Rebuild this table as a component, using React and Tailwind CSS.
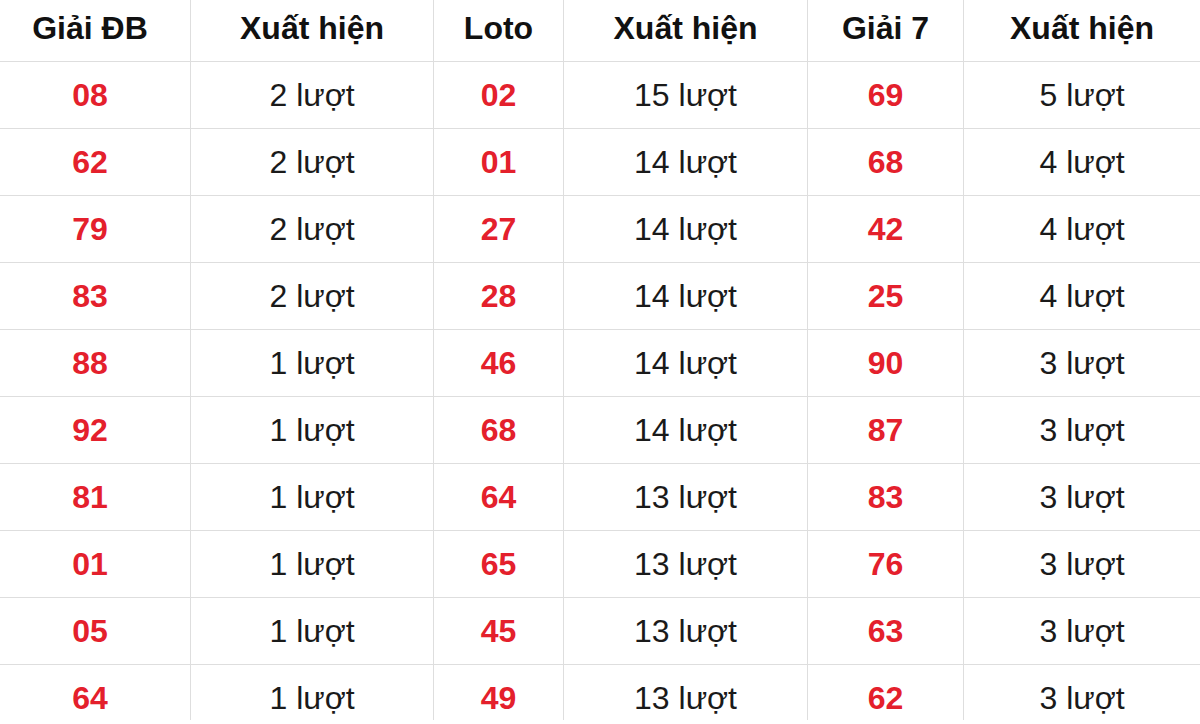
import React from "react";

const rows = [
  ["08", "2 lượt", "02", "15 lượt", "69", "5 lượt"],
  ["62", "2 lượt", "01", "14 lượt", "68", "4 lượt"],
  ["79", "2 lượt", "27", "14 lượt", "42", "4 lượt"],
  ["83", "2 lượt", "28", "14 lượt", "25", "4 lượt"],
  ["88", "1 lượt", "46", "14 lượt", "90", "3 lượt"],
  ["92", "1 lượt", "68", "14 lượt", "87", "3 lượt"],
  ["81", "1 lượt", "64", "13 lượt", "83", "3 lượt"],
  ["01", "1 lượt", "65", "13 lượt", "76", "3 lượt"],
  ["05", "1 lượt", "45", "13 lượt", "63", "3 lượt"],
  ["64", "1 lượt", "49", "13 lượt", "62", "3 lượt"],
];

const headers = ["Giải ĐB", "Xuất hiện", "Loto", "Xuất hiện", "Giải 7", "Xuất hiện"];

export default function App() {
  return (
    <div
      className="w-[1200px] h-[724px] bg-white overflow-hidden"
      style={{ fontFamily: '"Liberation Sans", Arial, sans-serif' }}
    >
      <div className="h-[720px] overflow-hidden">
        <div className="grid grid-cols-[190px_243px_130px_244px_156px_237px] h-[62px] border-b border-[#dedede]">
          {headers.map((h, i) => (
            <div
              key={i}
              className={
                "flex items-center justify-center pb-[6px] text-[32px] font-bold text-[#111] " +
                (i === 0 ? "pr-[10px]" : "border-l border-[#dedede]")
              }
            >
              {h}
            </div>
          ))}
        </div>
        {rows.map((r, ri) => (
          <div
            key={ri}
            className="grid grid-cols-[190px_243px_130px_244px_156px_237px] h-[67px] border-b border-[#dedede]"
          >
            {r.map((c, ci) => (
              <div
                key={ci}
                className={
                  "flex items-center justify-center text-[32px] " +
                  (ci % 2 === 0 ? "font-bold text-[#e4202c] " : "text-[#1a1a1a] ") +
                  (ci === 0 ? "pr-[10px]" : "border-l border-[#dedede]")
                }
              >
                {c}
              </div>
            ))}
          </div>
        ))}
      </div>
    </div>
  );
}
